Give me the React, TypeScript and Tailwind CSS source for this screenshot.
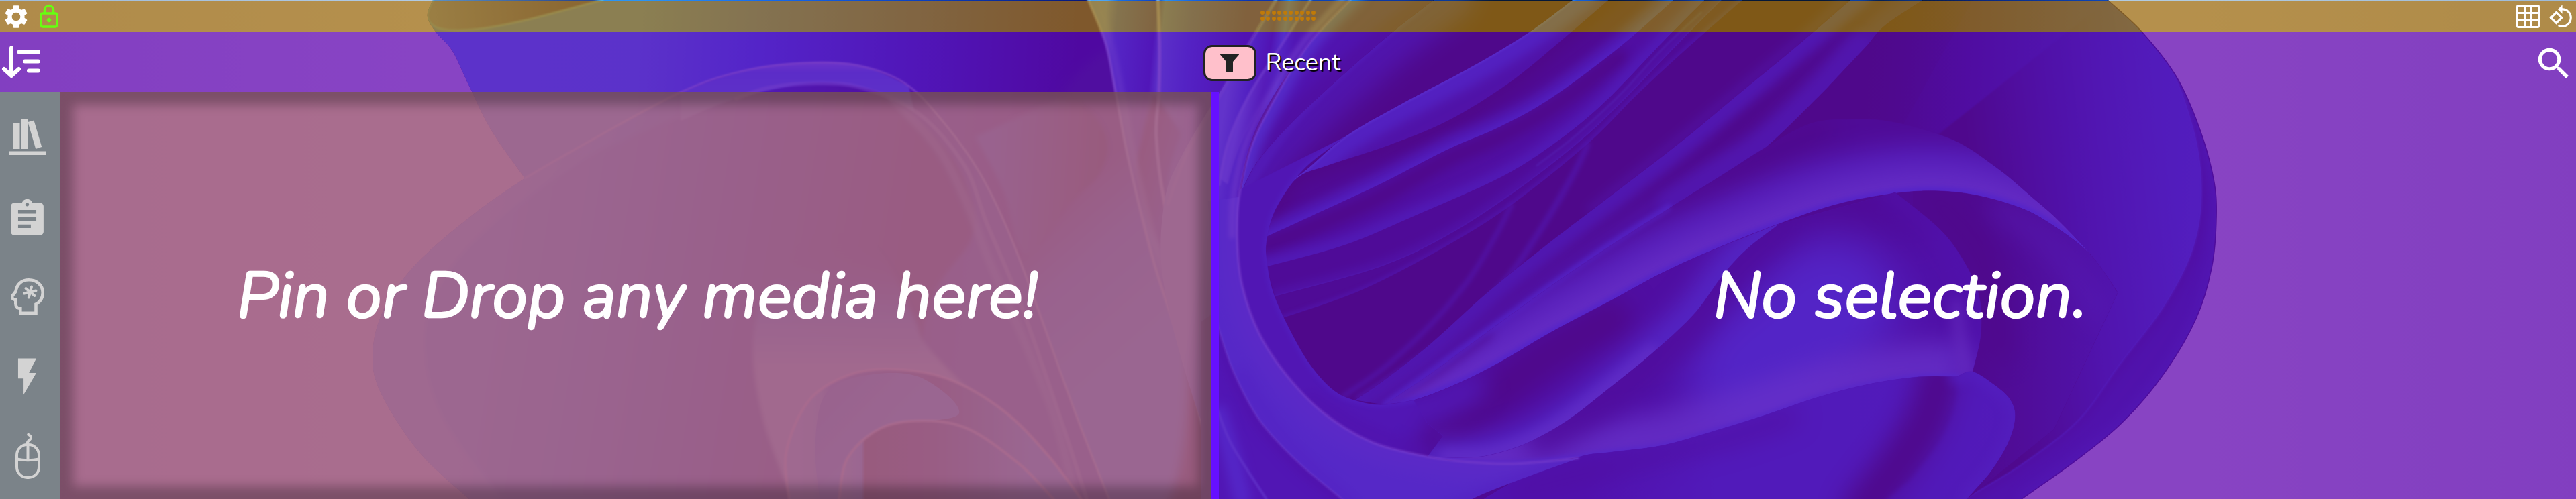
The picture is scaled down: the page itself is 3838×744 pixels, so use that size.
import React from "react";
import { MdAssignment, MdFlashOn, MdOutlineLock, MdRotate90DegreesCcw, MdSearch, MdSettings } from "react-icons/md";

type Pt = [number, number];
type Stop = [number, string, number?];
type Glow = [Pt[], string, number, string, number?];

const toPts = (s: string): Pt[] => s.trim().split(/\s+/).map((p) => p.split(",").map(Number) as Pt);
const tile = (x0: number, sx: number) => (s: string): Pt[] => toPts(s).map(([x, y]) => [x0 + x * sx, y * 0.4745]);
const W = tile(500, 0.829);
const S = tile(1700, 0.574);
const C = tile(1800, 0.5102);
const G = tile(2400, 0.5102);
const E = tile(2500, 0.8533);

/* Catmull-Rom spline through the points. */
function curve(p: Pt[], lead = "M"): string {
  let d = `${lead}${p[0][0].toFixed(1)} ${p[0][1].toFixed(1)}`;
  for (let i = 0; i < p.length - 1; i++) {
    const a = p[i - 1] || p[i], b = p[i], c = p[i + 1], e = p[i + 2] || c;
    d += `C${(b[0] + (c[0] - a[0]) / 6).toFixed(1)} ${(b[1] + (c[1] - a[1]) / 6).toFixed(1)} ${(c[0] - (e[0] - b[0]) / 6).toFixed(1)} ${(c[1] - (e[1] - b[1]) / 6).toFixed(1)} ${c[0].toFixed(1)} ${c[1].toFixed(1)}`;
  }
  return d;
}
const rev = (p: Pt[]) => [...p].reverse();
const between = (a: Pt[], b: Pt[]) => curve(a) + curve(rev(b), "L") + "Z";

function Fold({ d, from, to, stops, blur }: { d: string; from: Pt[]; to: Pt[]; stops: Stop[]; blur?: string }) {
  const id = React.useId();
  return (
    <>
      <linearGradient id={id} gradientUnits="userSpaceOnUse" x1={from[0][0]} y1={from[0][1]} x2={to[0][0]} y2={to[0][1]}>
        {stops.map(([o, c, a], i) => (
          <stop key={i} offset={o} stopColor={c} stopOpacity={a ?? 1} />
        ))}
      </linearGradient>
      <path d={d} fill={`url(#${id})`} filter={blur ? `url(#${blur})` : undefined} />
    </>
  );
}
function Line({ p, c, w = 3, o = 1, blur = "b1" }: { p: Pt[]; c: string; w?: number; o?: number; blur?: string }) {
  return <path d={curve(p)} fill="none" stroke={c} strokeWidth={w} opacity={o} filter={`url(#${blur})`} strokeLinecap="round" />;
}
/* A region lit by soft strokes that follow its edges. */
function Sheet({ d, base, glows, children }: { d: string; base: string; glows: Glow[]; children?: React.ReactNode }) {
  const id = React.useId();
  return (
    <>
      <clipPath id={id}><path d={d} /></clipPath>
      <path d={d} fill={base} stroke={base} strokeWidth="0.6" />
      <g clipPath={`url(#${id})`}>
        {children}
        {glows.map(([p, c, w, blur, o], i) => (
          <Line key={i} p={p} c={c} w={w} blur={blur} o={o ?? 1} />
        ))}
      </g>
    </>
  );
}

const DEEP = "#051838";
const DARK = "#082a78";
const MID = "#0c48b8";
const BLUE = "#0e60dc";
const BRIGHT = "#1888fa";
const LIGHT = "#4ba6f1";

const e0 = C("430,-20 415,0 300,130 210,280 130,450 95,610 88,680");
const e1 = C("690,-20 660,0 540,100 400,230 250,380 150,500 100,600 90,670");
const e2 = C("1090,-20 1065,0 940,100 770,210 560,330 400,430 280,540 190,600 90,670");
const e3 = C("1195,-20 1170,0 1040,120 880,260 700,380 520,460 350,520 260,560 200,650 172,740");
const e4 = C("1380,-20 1360,0 1200,150 1000,310 850,400 700,470 500,580 300,680 172,743");
const e5 = C("1470,-20 1450,0 1330,130 1150,330 1000,460 850,560 600,680 400,770 172,838");
const e6 = C("1515,-20 1500,0 1380,130 1200,330 1080,450 900,600 700,740 500,840 195,932");
const e7 = C("1580,-20 1560,0 1400,150 1250,300 1110,450 890,640 700,770 450,910 215,1000");
const f1 = C("430,1257 520,1190 650,1080 820,915 1000,760 1170,620 1376,450 1556,290 1736,130 1876,0 1900,-20");
const f2 = C("515,1272 650,1175 820,1040 1000,900 1150,790 1346,655 1516,540 1626,465 1776,310 1856,220 1926,140 1976,80 2086,0 2110,-20");
const f2b = C("515,1272 650,1175 820,1040 1000,900 1150,790 1346,655 1516,540 1626,465 1756,390 1876,375 2006,385 2176,440 2306,530 2406,620 2480,690 2576,800 2656,920");
const f3 = C("510,1272 600,1258 720,1210 850,1140 1000,1045 1176,945 1326,858 1476,785 1656,708 1826,645 1976,612 2106,600 2236,612 2376,655 2476,715 2576,800 2656,920");
const g2 = C("640,1435 740,1437 820,1430 930,1392 1050,1320 1176,1215 1296,1110 1416,990 1506,860 1576,780 1666,705");
const wall = G("830,605 960,720 1030,820 1075,930 1080,1050 1056,1168");
const k = [...C("640,1435 760,1452 900,1457 1080,1437 1176,1421"), ...G("150,1400 300,1355 450,1305 600,1250 750,1208 900,1184 1010,1184")];
const kHook = G("1010,1184 1056,1168 1120,1210 1165,1255 1180,1310 1160,1390 1110,1480 1040,1568 1030,1600");
const r1 = C("400,430 280,530 200,650 173,740 170,810 190,920 240,1040 300,1150 370,1230 440,1262 510,1272 600,1258");
const r2 = C("415,0 300,130 210,280 130,450 90,620 85,760 100,900 150,1050 230,1180 340,1300 480,1390 640,1435 760,1452 900,1457 1080,1440");
const r3 = C("20,980 30,1030 75,1170 150,1320 260,1450 390,1568 410,1600");
const rim = E("750,0 850,180 900,400 915,600 900,780 850,960 770,1150 700,1320 600,1460 500,1568");
const silhouette = E("750,0 810,100 870,240 910,400 935,560 940,680 932,840 905,1000 850,1170 780,1320 700,1440 600,1568");

function Wallpaper() {
  return (
    <svg className="absolute inset-0 h-full w-full" viewBox="0 0 3838 744" preserveAspectRatio="none" aria-hidden="true">
      <defs>
        {[["b1", 0.8], ["b3", 3], ["b8", 8], ["b20", 18], ["b35", 34]].map(([id, n]) => (
          <filter key={id} id={String(id)} filterUnits="userSpaceOnUse" x="400" y="-80" width="3000" height="920" colorInterpolationFilters="sRGB">
            <feGaussianBlur stdDeviation={n} />
          </filter>
        ))}
        <linearGradient id="sky">
          <stop offset="0" stopColor="#9fbbda" />
          <stop offset=".17" stopColor="#b1cbe4" />
          <stop offset=".85" stopColor="#b1cbe0" />
          <stop offset="1" stopColor="#9dbad8" />
        </linearGradient>
        <clipPath id="body"><path d={curve(W("175,0 165,50 180,100 210,160 240,270 280,410 340,560")) + curve(W("340,560 250,670 150,820 90,960 67,1100 80,1230 150,1420 240,1568"), "L") + curve(rev(silhouette), "L") + "Z"} /></clipPath>
      </defs>
      <rect width="3838" height="744" fill="url(#sky)" />
      <g clipPath="url(#body)">
        <rect x="500" width="2900" height="744" fill={DEEP} />
        {/* west */}
        <Fold d="M500 0H1720V744H500Z" from={W("180,100")} to={W("1330,240")} stops={[[0, "#2c96f6"], [0.32, "#2a94f4"], [0.5, "#146cf0"], [0.75, "#0a40c0"], [1, "#06187a"]]} />
        <Fold d={curve(W("175,0 165,50 180,85 215,95 270,88 350,60 480,0")) + "Z"} from={W("180,50")} to={W("430,10")} stops={[[0, "#5a90c4"], [1, "#2a4a90"]]} />
        <Line p={W("175,0 165,50 180,85 215,95 270,88 350,60 480,0")} c="#58b8e0" w={3} />
        <Fold d={curve(W("1300,300 1340,220 1400,150 1500,150 1500,1568 1100,1568 1080,1000 1240,800 1330,600 1385,500 1370,380")) + "Z"} from={W("1250,700")} to={W("1450,1100")} stops={[[0, DARK], [0.4, BLUE], [1, BRIGHT]]} blur="b8" />
        <Fold d={curve(W("1300,310 1340,320 1385,430 1375,540 1320,640 1240,800 1200,600 1150,430")) + "Z"} from={W("1180,500")} to={W("1380,520")} stops={[[0, BLUE], [1, DEEP]]} blur="b3" />

        <Fold d={curve(W("240,1568 150,1420 80,1230 67,1100 90,960 150,820 250,670 340,560 450,450 620,290 740,220 860,197 950,210 1030,270 1100,400 1160,550 1210,730 1260,960 1330,1300 1390,1568")) + "Z"} from={W("150,700")} to={W("1150,900")} stops={[[0, LIGHT], [0.12, "#48a0f0"], [0.35, BRIGHT], [0.6, "#0e50c0"], [0.85, "#0a34a0"], [1, "#0c48c0"]]} />
        <Fold d={curve(W("300,1568 190,1300 160,1060 200,860 300,680 450,500 600,380 720,310 850,262 960,280 1040,370 1110,500 1145,650 1140,760 1060,1000 1040,1568")) + "Z"} from={W("280,700")} to={W("1000,900")} stops={[[0, "#2a90f0"], [0.3, "#1670e4"], [0.6, "#0c48b8"], [1, "#07246c"]]} blur="b3" />
        <Fold d={between(W("620,290 740,220 860,197 950,210 1030,270"), W("620,380 720,310 850,262 960,280 1040,350"))} from={W("860,197")} to={W("860,275")} stops={[[0, "#5c98f0"], [0.4, "#2c84ee"], [1, "#308cf0"]]} blur="b1" />
        <Line p={W("340,560 450,450 620,290 740,220 860,197 950,210 1030,270 1100,400 1160,550 1210,730 1260,960 1330,1300 1390,1568")} c="#8cc0ee" w={3} o={0.8} />
        <Line p={W("720,310 780,275 870,262 950,278 1050,360 1130,520 1170,700 1230,950 1300,1300 1350,1568")} c="#74b4f0" w={6} o={0.5} />
        <Line p={W("1000,310 1080,460 1130,620 1170,800 1220,1000 1290,1300 1330,1568")} c="#50a8e8" w={12} o={0.5} blur="b3" />

        <Fold d={curve(W("820,1568 770,1330 750,1100 770,930 830,790 900,720 980,800 1040,1000 1060,1080 1130,1210 1250,1400 1320,1568")) + "Z"} from={W("900,740")} to={W("900,1150")} stops={[[0, DARK, 0], [0.35, MID, 0.5], [0.6, "#1478e8", 0.8], [1, "#5ca4dc"]]} blur="b3" />
        <Fold d={curve(W("815,1568 810,1420 850,1260 920,1180 1000,1160 1100,1190 1200,1290 1280,1430 1340,1568")) + "Z"} from={W("820,1350")} to={W("1250,1350")} stops={[[0, LIGHT], [0.12, "#3490e8"], [0.16, BLUE], [0.6, DARK], [1, BRIGHT]]} />
        <Line p={W("815,1568 810,1420 850,1260 920,1180 1000,1160 1100,1190 1200,1290 1280,1430 1340,1568")} c="#b2b4d8" w={4} o={0.8} />
        <Fold d={curve(W("870,1568 862,1400 880,1240 950,1180 1050,1185 1120,1300 1000,1340 930,1420 905,1568")) + "Z"} from={W("900,1180")} to={W("1000,1350")} stops={[[0, BLUE], [1, BRIGHT]]} />
        <Fold d={curve(W("905,1568 920,1440 980,1345 1060,1322 1140,1350 1230,1460 1290,1568")) + "Z"} from={W("905,1450")} to={W("1240,1450")} stops={[[0, LIGHT], [0.12, BRIGHT], [0.14, DEEP], [0.5, DARK], [1, BRIGHT]]} />
        <Line p={W("905,1568 920,1440 980,1345 1060,1322 1140,1350 1230,1460 1290,1568")} c="#b0b4dc" w={4} o={0.8} />

        {/* long vertical strands */}
        <Fold d={between(W("1353,0 1385,140 1402,290 1425,500 1470,820 1530,1150 1600,1568"), S("350,0 235,230 170,400 190,700 203,1100 300,1350 520,1568"))} from={[[1640, 100]]} to={[[1850, 120]]} stops={[[0, "#4aa4f4"], [0.08, "#1670e8"], [0.35, "#0b40c0"], [0.41, "#2a8ef0"], [0.6, "#1466e4"], [1, "#0a34b0"]]} />
        <Fold d={between(W("1470,290 1450,430 1440,540 1460,700 1500,820"), W("1520,420 1500,530 1495,650 1510,820 1560,1000"))} from={[[1690, 200]]} to={[[1760, 220]]} stops={[[0, DEEP], [1, MID]]} blur="b3" />
        <Line p={W("1353,0 1385,140 1402,290 1425,500 1470,820 1530,1150 1590,1568")} c="#7cbcf0" w={4} o={0.9} />
        <Line p={W("1370,0 1395,150 1412,290 1440,540 1490,860 1568,1200")} c="#58aaf0" w={10} o={0.5} blur="b3" />
        <Line p={W("1478,0 1481,150 1480,290 1475,430 1490,640 1520,830 1568,1000")} c="#86c2f4" w={5} o={0.85} />
        <Fold d={between(S("350,0 230,240 110,480 60,640 60,900 150,1300 260,1568"), S("545,0 400,200 300,400 255,600 250,750 262,880 330,1568"))} from={S("230,240")} to={S("380,270")} stops={[[0, "#3e98f4"], [0.35, BLUE], [0.6, "#0a38b0"], [0.8, BRIGHT], [1, MID]]} />
        <Line p={S("350,0 270,160 200,310 120,480 70,640")} c="#5cacf4" w={5} o={0.7} />
        <Fold d={between(S("440,0 360,150 280,300 225,450 203,560"), S("500,0 410,150 330,300 260,450 225,580"))} from={S("270,300")} to={S("340,320")} stops={[[0, "#4a9cf4"], [1, "#0a38b0", 0.4]]} blur="b1" />
        <Line p={S("440,0 360,150 280,300 225,450 203,580")} c="#64b0f8" w={4} o={0.7} />

        {/* east body */}
        <path d={curve(C("415,0 210,280 90,620 100,900 340,1300 640,1435")) + "L3200 744V-20H2010Z"} fill={DEEP} />
        <Fold d={"M2480 -20" + curve(silhouette, "L") + "L2480 744Z"} from={E("330,300")} to={E("910,350")} stops={[[0, DEEP], [0.3, "#07247a"], [0.7, "#0c46b8"], [1, "#1258d4"]]} />
        <Fold d={"M2480 -20H2950L2800 250L2480 400Z"} from={E("280,0")} to={E("520,120")} stops={[[0, DEEP], [1, DEEP, 0]]} />
        <Fold d={curve(rim) + "L2500 744L2700 350Z"} from={E("560,1000")} to={E("890,900")} stops={[[0, DEEP, 0.9], [0.5, "#09308c", 0.6], [1, "#0f50c8", 0.3]]} blur="b1" />
        <Sheet d={between(rim, silhouette)} base="#0a369c" glows={[[rim, "#082878", 14, "b8", 0.8], [silhouette, "#0c44b4", 16, "b8", 0.8]]} />
        <Line p={rim} c="#1a60d8" w={2} o={0.5} />

        {/* hollow: bands running up and to the right */}
        <Sheet d={between(e0, e1)} base="#0a38a4" glows={[[e1, DARK, 40, "b8", 0.8], [e0, BRIGHT, 28, "b8", 0.9]]} />
        <Sheet d={between(e1, e2)} base={DEEP} glows={[[e1, "#0b40a8", 90, "b20", 0.9], [C("640,0 450,170 300,320 190,460 110,590"), "#1258c8", 16, "b3", 0.6]]} />
        <Sheet d={between(e2, e3)} base="#0a3690" glows={[[e2, "#1264e0", 50, "b8", 0.9], [e2, "#2a84f6", 5, "b1", 0.7]]} />
        <Sheet d={between(e3, e4)} base="#061d52" glows={[[e3, DEEP, 30, "b8"], [e4, "#0d50c4", 34, "b8", 0.95], [e4, "#1260dc", 10, "b3", 0.6]]} />
        <Sheet d={between(e4, e5)} base="#082a7c" glows={[[C("1200,180 1000,340 850,430 700,500 500,620 300,715 172,770"), DEEP, 26, "b8", 0.95], [e5, "#0e50c0", 26, "b8", 0.9]]} />
        <Sheet d={between(e5, e6)} base="#06205e" glows={[[e6, "#0b3c9c", 16, "b8", 0.9], [e6, "#1050b0", 3, "b1", 0.6]]} />
        <Sheet d={between(e6, e7)} base="#061f58" glows={[[e7, "#0b3c98", 8, "b3", 0.8]]} />
        <Line p={C("1440,40 1330,150 1210,290 1080,420 960,520")} c="#1458a8" w={3} o={0.6} />
        <Line p={C("885,645 840,740 760,880 650,1020 520,1150 395,1245")} c="#0c3c98" w={7} o={0.75} blur="b3" />
        <Line p={C("1108,455 1060,560 960,740 860,890 700,1060 440,1250")} c="#0c3c98" w={9} o={0.75} blur="b3" />

        {/* fan sweeping to the upper right */}
        <Line p={C("1120,660 1376,440 1556,280 1736,120 1860,0")} c="#0d409c" w={14} o={0.6} blur="b8" />
        <Sheet d={between(f1, f2)} base={DEEP} glows={[[f1, "#0c48b4", 44, "b8", 0.9], [f2, "#0b3c9c", 50, "b20", 0.9], [C("1346,640 1516,520 1626,440 1776,290 1900,140"), "#0d46ac", 36, "b8", 0.7], [C("515,1272 820,1035 1150,785 1346,650"), "#1460dc", 10, "b3", 0.8]]} />
        <Sheet
          d={between(f2b, f3)}
          base="#06205c"
          glows={[
            [C("620,1220 820,1060 1050,890 1346,690 1626,500 1800,400"), DEEP, 30, "b20", 0.9],
            [f3, "#1e60d4", 140, "b20", 0.85],
            [f3, "#4c88e8", 64, "b20", 0.85],
            [f3, "#1468f0", 12, "b3", 0.9],
            [C("500,1272 650,1180 820,1050"), DEEP, 12, "b8", 0.7],
          ]}
        />
        <Line p={C("525,1268 650,1178 820,1042 1000,902 1150,792 1346,657")} c="#1866e8" w={6} o={0.6} blur="b3" />

        {/* beneath the arch */}
        <Sheet d={curve(f3) + "L3060 640L2930 744H2100Z"} base="#061e52" glows={[]}>
          <Fold d="M2850 280H3200V744H2850Z" from={G("1080,1000")} to={G("1500,1000")} stops={[[0, "#061c48"], [1, "#0b3ca4"]]} />
          <Line p={G("1130,660 1250,740 1340,840 1420,980")} c="#2258c0" w={36} o={0.4} blur="b20" />
          <Line p={G("940,620 1060,760 1120,920 1140,1100")} c={DEEP} w={40} o={0.8} blur="b20" />
        </Sheet>
        <Sheet
          d={curve(rev(g2)) + curve(k, "L") + curve(rev(wall), "L") + "Z"}
          base="#09308e"
          glows={[
            [G("500,690 700,650 900,650"), "#061c58", 90, "b35"],
            [G("640,960 560,1060 420,1180"), "#1470f0", 200, "b35", 0.95],
            [k, "#4c90f2", 100, "b20", 0.8],
            [wall, "#0a34a0", 50, "b20", 0.6],
            [G("1010,960 1020,1060 1035,1160"), "#5088d8", 20, "b8", 0.5],
            [G("500,700 400,800 300,920 220,1040 100,1150 -50,1280 -200,1380"), "#07246c", 52, "b20", 0.9],
            [k, "#1c70f0", 9, "b3", 0.8],
          ]}
        />
        <Sheet
          d={curve(f3.slice(0, 9)) + curve(rev(g2), "L") + "Z"}
          base="#07287c"
          glows={[
            [C("640,1400 740,1320 860,1220 1000,1110 1180,1000"), DEEP, 60, "b20"],
            [g2, "#1674f0", 54, "b20", 0.9],
            [C("700,1436 820,1430 930,1392 1050,1320 1176,1215 1296,1110"), "#4088ec", 26, "b8", 0.75],
            [C("500,1300 640,1290 780,1220"), "#0e50cc", 34, "b20", 0.9],
          ]}
        />

        {/* pocket below the lower arch */}
        <Sheet d={curve([...C("700,1640 900,1510 1080,1437"), ...k.slice(4)]) + curve(kHook, "L") + "Z"} base="#0a3cb0" glows={[]}>
          <Fold d="M2100 540H3040V744H2100Z" from={C("1100,1560")} to={G("1180,1590")} stops={[[0, "#0a34a0"], [0.3, "#0c4cc4"], [0.6, "#0c4cc4"], [1, "#0e50c8"]]} />
          <Line p={C("900,1545 1200,1460 1500,1380 1700,1310")} c="#082678" w={26} o={0.8} blur="b20" />
          <Line p={G("960,1180 930,1300 860,1430 740,1600")} c={DEEP} w={66} o={0.95} blur="b20" />
          <path d={curve(G("1015,1184 1005,1280 960,1390 880,1500 800,1600 1040,1600 1300,1400 1200,1200"))} fill="#0d48bc" opacity={0.5} filter="url(#b3)" />
          <Line p={kHook} c="#1258d0" w={24} o={0.8} blur="b8" />
        </Sheet>

        {/* inner ring */}
        <Sheet
          d={curve(C("85,600 85,760 100,900 150,1050 230,1180 340,1300 480,1390 640,1435")) + "L2150 650" + curve(C("640,1330 600,1258"), "L") + curve(rev(r1), "L") + "Z"}
          base="#0b42b4"
          glows={[[C("620,1440 660,1380 700,1300"), DEEP, 34, "b20", 0.9], [C("300,1250 450,1350 620,1420"), "#0a349c", 24, "b8", 0.6], [r1, "#105ad4", 8, "b3", 0.8]]}
        />

        {/* outer bright ring */}
        <Sheet
          d={curve(r2.slice(4)) + curve(C("1080,1440 900,1510 770,1568 750,1600"), "L") + curve(rev(r3), "L") + "L1800 300Z"}
          base="#1a78ec"
          glows={[[r2, "#3c80ea", 40, "b20", 0.6], [C("100,1180 190,1340 300,1470 420,1580"), "#1264e0", 22, "b8", 0.6], [C("1080,1440 900,1510 700,1600"), "#1460d8", 16, "b8", 0.7]]}
        />
        <Sheet d={curve(r3) + "L1790 780V480Z"} base="#0b40b4" glows={[[r3, "#0a3298", 22, "b8", 0.8], [C("30,1300 65,1420 100,1568"), "#1670ec", 26, "b8"]]} />
        <Line p={r3} c="#58a8f4" w={3} o={0.6} />
        <Line p={C("28,1290 70,1400 170,1568")} c="#3c98f4" w={4} o={0.7} />
        <Line p={r2} c="#7cb0f4" w={4} o={0.6} />
        <Line p={C("400,-10 280,130 190,280 110,450 75,610 70,740")} c="#68acf4" w={10} o={0.6} blur="b3" />
      </g>
      <path d={curve(silhouette)} fill="none" stroke="#06226c" strokeWidth="1.5" />
    </svg>
  );
}

const SortIcon = () => (
  <svg className="h-[50px] w-[60px]" viewBox="0 0 60 50" fill="none" stroke="#fff" strokeWidth="6" strokeLinecap="round">
    <path d="M17 3.500V44M6 35l11 10 11-10" />
    <path d="M28.500 9.500H57M37 23.500H57M43 37.500H57" />
  </svg>
);
const BooksIcon = () => (
  <svg className="h-[54px] w-[55px]" viewBox="0 0 55 54" fill="currentColor">
    <path d="M6 6h9.500v39H6zM18 0h9.500v45H18zM27.500 5l9-2.500L48.200 42l-9 3zM0 48.500h55v5.500H0z" />
  </svg>
);
const HeadIcon = () => (
  <svg className="h-[54px] w-[50px]" viewBox="0 0 50 54" fill="none" stroke="currentColor">
    <path strokeWidth="4.600" d="M14.300 54V44.500H12C9.500 44 7.300 41 7.300 37.500V31.500H4.500C2.500 30.500 1.500 28 2.600 26L7.500 19.500C9 8.500 16.500 2.300 27 2.300C39 2.300 47.700 10.500 47.700 21.500C47.700 30 43.500 35.500 37.500 38.500V51.800H14.300" />
    <path strokeWidth="4" strokeLinecap="round" d="M31 12.500l-4.200 16M22.500 15l13 11M20 22.500l17.500-4" />
  </svg>
);
const MouseIcon = () => (
  <svg className="h-[68px] w-[37px]" viewBox="0 0 37 68" fill="none" stroke="currentColor" strokeWidth="4">
    <rect x="2" y="17" width="33" height="49" rx="15.500" />
    <path d="M2 38.500q16.500 3.500 33 0M18.500 16v23M17.500 16c0-6 5.500-5 5.500-9.500 0-2-2-4-5.500-5.500" />
  </svg>
);
const GridIcon = () => (
  <svg className="h-[35px] w-[35px]" viewBox="0 0 35 35" fill="none" stroke="#fff" strokeWidth="3">
    <rect x="1.500" y="1.500" width="32" height="32" rx="1.500" />
    <path d="M12.500 1v33M22.500 1v33M1 12.500h33M1 22.500h33" />
  </svg>
);

export default function App() {
  return (
    <div className="relative h-[744px] w-full overflow-hidden font-['Nunito','Lato',sans-serif] text-white">
      <Wallpaper />
      <div className="relative flex h-full flex-col pt-[2px]">
        <header className="flex h-[45px] shrink-0 items-center justify-between bg-[rgba(183,117,8,0.69)] pr-[3px] pl-[3px]">
          <div className="flex w-[110px] items-center gap-[8px]">
            <MdSettings className="size-[42px]" />
            <MdOutlineLock className="size-[40px] text-[#66ff10]" />
          </div>
          <div className="mr-[20px] -mt-[2px] grid grid-cols-10 gap-x-[2.500px] gap-y-[2.500px]">
            {Array.from({ length: 20 }, (_, i) => (
              <span key={i} className="size-[6px] rounded-full bg-[#c07a08]" />
            ))}
          </div>
          <div className="flex w-[90px] items-center justify-end gap-[13px]">
            <GridIcon />
            <MdRotate90DegreesCcw className="size-[38px]" />
          </div>
        </header>
        <div className="flex min-h-0 flex-1 flex-col bg-[rgba(117,2,180,0.67)]">
          <div className="flex h-[90px] shrink-0 items-center justify-between pr-[2px]">
            <div className="mt-[2px] flex w-[66px]"><SortIcon /></div>
            <div className="mt-[4px] mr-[48px] flex items-center gap-[14px]">
              <button className="flex h-[54px] w-[79px] items-center justify-center rounded-[13px] border-[3px] border-[#222] bg-[#ffc0cb]">
                <svg className="h-[28px] w-[28px]" viewBox="0 0 28 28" fill="#222"><path d="M0 0h28v1.500L19 12v14.500q0 1.500-1.500 1.500h-7Q9 28 9 26.500V12L0 1.500z" /></svg>
              </button>
              <span className="w-[114px] text-[36px] leading-[54px] whitespace-nowrap [text-shadow:2px_2px_1px_#000]">Recent</span>
            </div>
            <div className="mt-[6px] flex w-[62px]"><MdSearch className="size-[62px]" /></div>
          </div>
          <main className="flex min-h-0 flex-1">
            <nav className="flex w-[90px] shrink-0 flex-col bg-[#7b8389] text-[#d3d3d3]">
              <div className="mt-[40px] pl-[14px]"><BooksIcon /></div>
              <div className="mt-[63px] pl-[8px]"><MdAssignment className="size-[65px]" /></div>
              <div className="mt-[56px] pl-[16px]"><HeadIcon /></div>
              <div className="mt-[60px] pl-[8px]"><MdFlashOn className="size-[65px]" /></div>
              <div className="mt-[52px] pl-[23px]"><MouseIcon /></div>
            </nav>
            <section className="flex w-[1714px] shrink-0 items-center justify-center bg-[rgba(184,127,120,0.7)] pt-[3px] pl-[5px] shadow-[inset_0_0_16px_19px_rgba(0,0,0,0.27)]">
              <p className="text-[96px] leading-none whitespace-nowrap italic [-webkit-text-stroke:2.500px_#fff]">Pin or Drop any media here!</p>
            </section>
            <div className="w-[12px] shrink-0 bg-[#6610ff]" />
            <section className="flex flex-1 items-center justify-center pt-[3px] pl-[8px]">
              <p className="text-[96px] leading-none whitespace-nowrap italic [-webkit-text-stroke:2.500px_#fff]">No selection.</p>
            </section>
          </main>
        </div>
      </div>
    </div>
  );
}
